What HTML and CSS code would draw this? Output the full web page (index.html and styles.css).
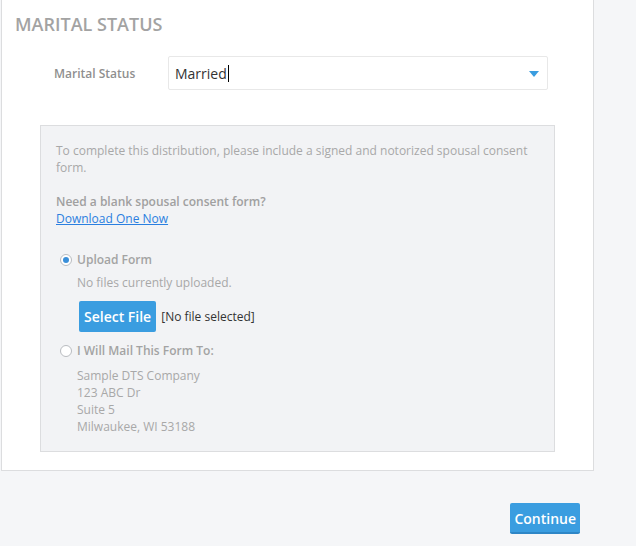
FILE: index.html
```html
<!DOCTYPE html>
<html>
<head>
    <title>Marital Status</title>
    <link rel="stylesheet" href="styles.css">
</head>
<body>
    <div class="panel">
        <h2 class="section-title">MARITAL STATUS</h2>
        <div class="form-row">
            <div class="form-label">Marital Status</div>
            <div class="select">
                <span class="select-value">Married</span><span class="caret"></span>
                <span class="select-arrow"></span>
            </div>
        </div>
        <div class="consent">
            <p class="note">To complete this distribution, please include a signed and notorized spousal consent form.</p>
            <p class="note note-gap"><strong>Need a blank spousal consent form?</strong><br><a href="#">Download One Now</a></p>
            <div class="option option-first">
                <div class="radio-row"><span class="radio checked"></span>Upload Form</div>
                <div class="option-body">
                    <div class="muted">No files currently uploaded.</div>
                    <div class="file-row">
                        <button class="btn">Select File</button>
                        <span class="file-name">[No file selected]</span>
                    </div>
                </div>
            </div>
            <div class="option option-second">
                <div class="radio-row"><span class="radio"></span>I Will Mail This Form To:</div>
                <div class="option-body address">
                    Sample DTS Company<br>
                    123 ABC Dr<br>
                    Suite 5<br>
                    Milwaukee, WI 53188
                </div>
            </div>
        </div>
    </div>
    <div class="actions">
        <button class="btn btn-continue">Continue</button>
    </div>
</body>
</html>
```

FILE: styles.css
```css
body {
    font-family: "Open Sans", "Liberation Sans", sans-serif;
    margin: 0;
    background: #f5f6f8;
    color: #333;
}
.panel {
    margin-left: 1px;
    width: 565px;
    background: #fff;
    border: 1px solid #dcdddf;
    border-top: none;
    padding: 12px 13px 18px 13px;
}
.section-title {
    margin: 0;
    font-size: 18px;
    line-height: 24px;
    font-weight: 600;
    color: #a3a3a3;
}
.form-row {
    display: grid;
    grid-template-columns: 114px 380px;
    align-items: center;
    margin-top: 20px;
    padding-left: 39px;
}
.form-label {
    font-size: 12px;
    font-weight: 600;
    color: #8f8f8f;
}
.select {
    position: relative;
    display: flex;
    align-items: center;
    height: 32px;
    border: 1px solid #e8e8e8;
    border-radius: 2px;
    padding-left: 6px;
    font-size: 14px;
    color: #333;
}
.caret {
    display: inline-block;
    width: 0;
    height: 17px;
    border-left: 1px solid #000;
    margin-left: 1px;
}
.select-arrow {
    position: absolute;
    right: 8px;
    top: 14px;
    width: 0;
    height: 0;
    border-left: 5px solid transparent;
    border-right: 5px solid transparent;
    border-top: 6px solid #3a9de0;
}
.consent {
    margin: 35px 0 0 25px;
    width: 483px;
    background: #f2f3f5;
    border: 1px solid #dcdddf;
    padding: 16px 15px 16px 15px;
    font-size: 12px;
    line-height: 17px;
    color: #a8a8a8;
}
.note {
    margin: 0;
}
.note-gap {
    margin-top: 17px;
}
.note strong {
    font-weight: 600;
    color: #a0a0a0;
}
.note a {
    color: #2b7fe0;
    text-decoration: underline;
}
.option-first {
    margin-top: 24px;
}
.option-second {
    margin-top: 10px;
}
.radio-row {
    display: flex;
    align-items: center;
    margin-left: 4px;
    font-weight: 600;
    color: #a3a3a3;
}
.radio {
    box-sizing: border-box;
    width: 12px;
    height: 12px;
    margin-right: 5px;
    border: 1px solid #b9bcc0;
    border-radius: 50%;
    background: #fff;
    display: flex;
    align-items: center;
    justify-content: center;
}
.radio.checked::after {
    content: "";
    width: 6px;
    height: 6px;
    border-radius: 50%;
    background: #3a8fd9;
}
.option-body {
    padding-left: 21px;
}
.muted {
    margin-top: 6px;
}
.address {
    margin-top: 8px;
}
.file-row {
    display: flex;
    align-items: center;
    margin-top: 10px;
    padding-left: 2px;
}
.btn {
    font-family: inherit;
    font-size: 14px;
    font-weight: 600;
    color: #fff;
    background: #3a9de0;
    border: none;
    border-radius: 2px;
    height: 31px;
    padding: 0 5px;
    cursor: pointer;
}
.file-name {
    margin-left: 5px;
    color: #333;
}
.actions {
    display: flex;
    justify-content: flex-end;
    margin-top: 32px;
    padding-right: 56px;
}
.btn-continue {
    border-bottom: 2px solid #2e86c6;
    padding: 2px 4px 0 4px;
}
```
